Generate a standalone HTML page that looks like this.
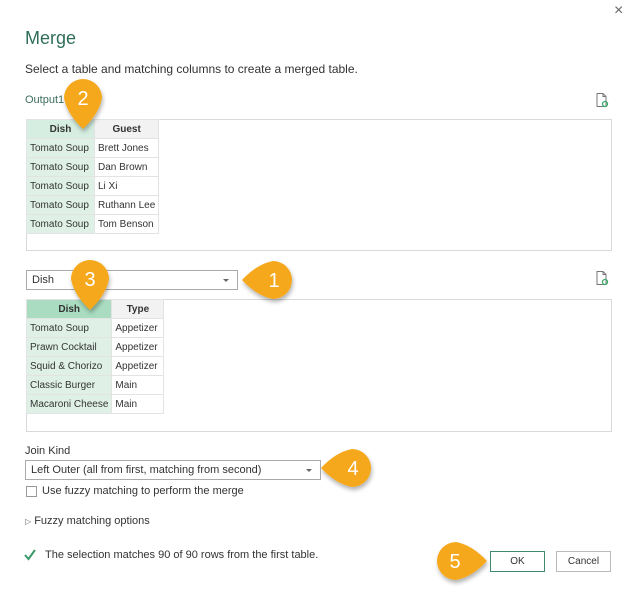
<!DOCTYPE html>
<html><head><meta charset="utf-8"><style>
*{margin:0;padding:0;box-sizing:border-box}
body{width:639px;height:597px;background:#fff;font-family:"Liberation Sans",sans-serif;position:relative;overflow:hidden;color:#333}
.a{position:absolute}
.t{font-size:11px;color:#333;white-space:nowrap}
table{border-collapse:collapse;position:absolute;font-size:10px}
td{border:1px solid #e3e3e3;height:19px;padding:0 3px;white-space:nowrap;color:#333}
th{border:1px solid #e3e3e3;height:19px;font-weight:bold;color:#333;background:#f2f2f2}
.g{background:#dff1e7}
th.g{background:#d6eee1}
th.s{background:#a9dcc0}
.box{position:absolute;border:1px solid #d9d9d9}
.dd{position:absolute;border:1px solid #aaa;font-size:11px;padding-left:5px;line-height:18px}
.dd:after{content:"";position:absolute;right:8px;top:8px;border:3px solid transparent;border-top:3px solid #666}
.btn{position:absolute;border:1px solid #bbb;font-size:10px;text-align:center;line-height:20px;background:#fff}
</style></head><body>
<div class="a" style="left:614px;top:2px;font-size:16px;color:#666">×</div>
<div class="a" style="left:25px;top:28px;font-size:18px;color:#2f6e5a">Merge</div>
<div class="a t" style="left:25px;top:62px;font-size:12px">Select a table and matching columns to create a merged table.</div>
<div class="a t" style="left:25px;top:94px;color:#3b6d5c">Output1</div>

<svg class="a" style="left:594px;top:92px" width="16" height="16"><path d="M3 1.5h6l3 3v10H3z M9 1.5v3h3" fill="none" stroke="#777"/><circle cx="11" cy="12" r="2.5" fill="none" stroke="#3aaa6a" stroke-width="1.3"/></svg>
<svg class="a" style="left:594px;top:270px" width="16" height="16"><path d="M3 1.5h6l3 3v10H3z M9 1.5v3h3" fill="none" stroke="#777"/><circle cx="11" cy="12" r="2.5" fill="none" stroke="#3aaa6a" stroke-width="1.3"/></svg>

<div class="box" style="left:26px;top:119px;width:586px;height:132px"></div>
<table style="left:26px;top:119px">
<tr><th class="g" style="width:68px">Dish</th><th style="width:64px">Guest</th></tr>
<tr><td class="g">Tomato Soup</td><td>Brett Jones</td></tr>
<tr><td class="g">Tomato Soup</td><td>Dan Brown</td></tr>
<tr><td class="g">Tomato Soup</td><td>Li Xi</td></tr>
<tr><td class="g">Tomato Soup</td><td>Ruthann Lee</td></tr>
<tr><td class="g">Tomato Soup</td><td>Tom Benson</td></tr>
</table>

<div class="dd" style="left:26px;top:270px;width:212px;height:20px">Dish</div>

<div class="box" style="left:26px;top:299px;width:586px;height:133px"></div>
<table style="left:26px;top:299px">
<tr><th class="s" style="width:85px">Dish</th><th style="width:52px">Type</th></tr>
<tr><td class="g">Tomato Soup</td><td>Appetizer</td></tr>
<tr><td class="g">Prawn Cocktail</td><td>Appetizer</td></tr>
<tr><td class="g">Squid &amp; Chorizo</td><td>Appetizer</td></tr>
<tr><td class="g">Classic Burger</td><td>Main</td></tr>
<tr><td class="g">Macaroni Cheese</td><td>Main</td></tr>
</table>

<div class="a t" style="left:25px;top:445px">Join Kind</div>
<div class="dd" style="left:25px;top:460px;width:296px;height:20px">Left Outer (all from first, matching from second)</div>
<div class="a" style="left:26px;top:486px;width:11px;height:11px;border:1px solid #999"></div>
<div class="a t" style="left:42px;top:485px">Use fuzzy matching to perform the merge</div>
<div class="a t" style="left:25px;top:515px"><span style="font-size:8px;color:#666">▷</span> Fuzzy matching options</div>
<svg class="a" style="left:23px;top:548px" width="14" height="14"><path d="M2 7l3.5 4L12 2" fill="none" stroke="#3a9a6a" stroke-width="2"/></svg>
<div class="a t" style="left:45px;top:549px">The selection matches 90 of 90 rows from the first table.</div>
<div class="btn" style="left:490px;top:551px;width:55px;height:21px;border-color:#3f8a6a">OK</div>
<div class="btn" style="left:556px;top:551px;width:55px;height:21px">Cancel</div>

<svg class="a" style="left:0;top:0" width="639" height="597">
<defs><filter id="sh" x="-50%" y="-50%" width="200%" height="200%"><feDropShadow dx="1" dy="3" stdDeviation="2" flood-color="#000" flood-opacity="0.3"/></filter>
<path id="p" d="M-31 0Q-16 -16 0 -19A19 19 0 1 1 0 19Q-16 16 -31 0Z" fill="#f5a81a"/></defs>
<g filter="url(#sh)">
<use href="#p" transform="translate(273,280)"/>
<use href="#p" transform="translate(83,98) rotate(-90)"/>
<use href="#p" transform="translate(90,279) rotate(-90)"/>
<use href="#p" transform="translate(352,468)"/>
<use href="#p" transform="translate(456,561) rotate(180)"/>
</g>
<g fill="#fff" font-family="Liberation Sans" font-size="20" text-anchor="middle">
<text x="274" y="287">1</text><text x="83" y="105">2</text><text x="90" y="286">3</text><text x="353" y="475">4</text><text x="455" y="568">5</text>
</g>
</svg>
</body></html>
